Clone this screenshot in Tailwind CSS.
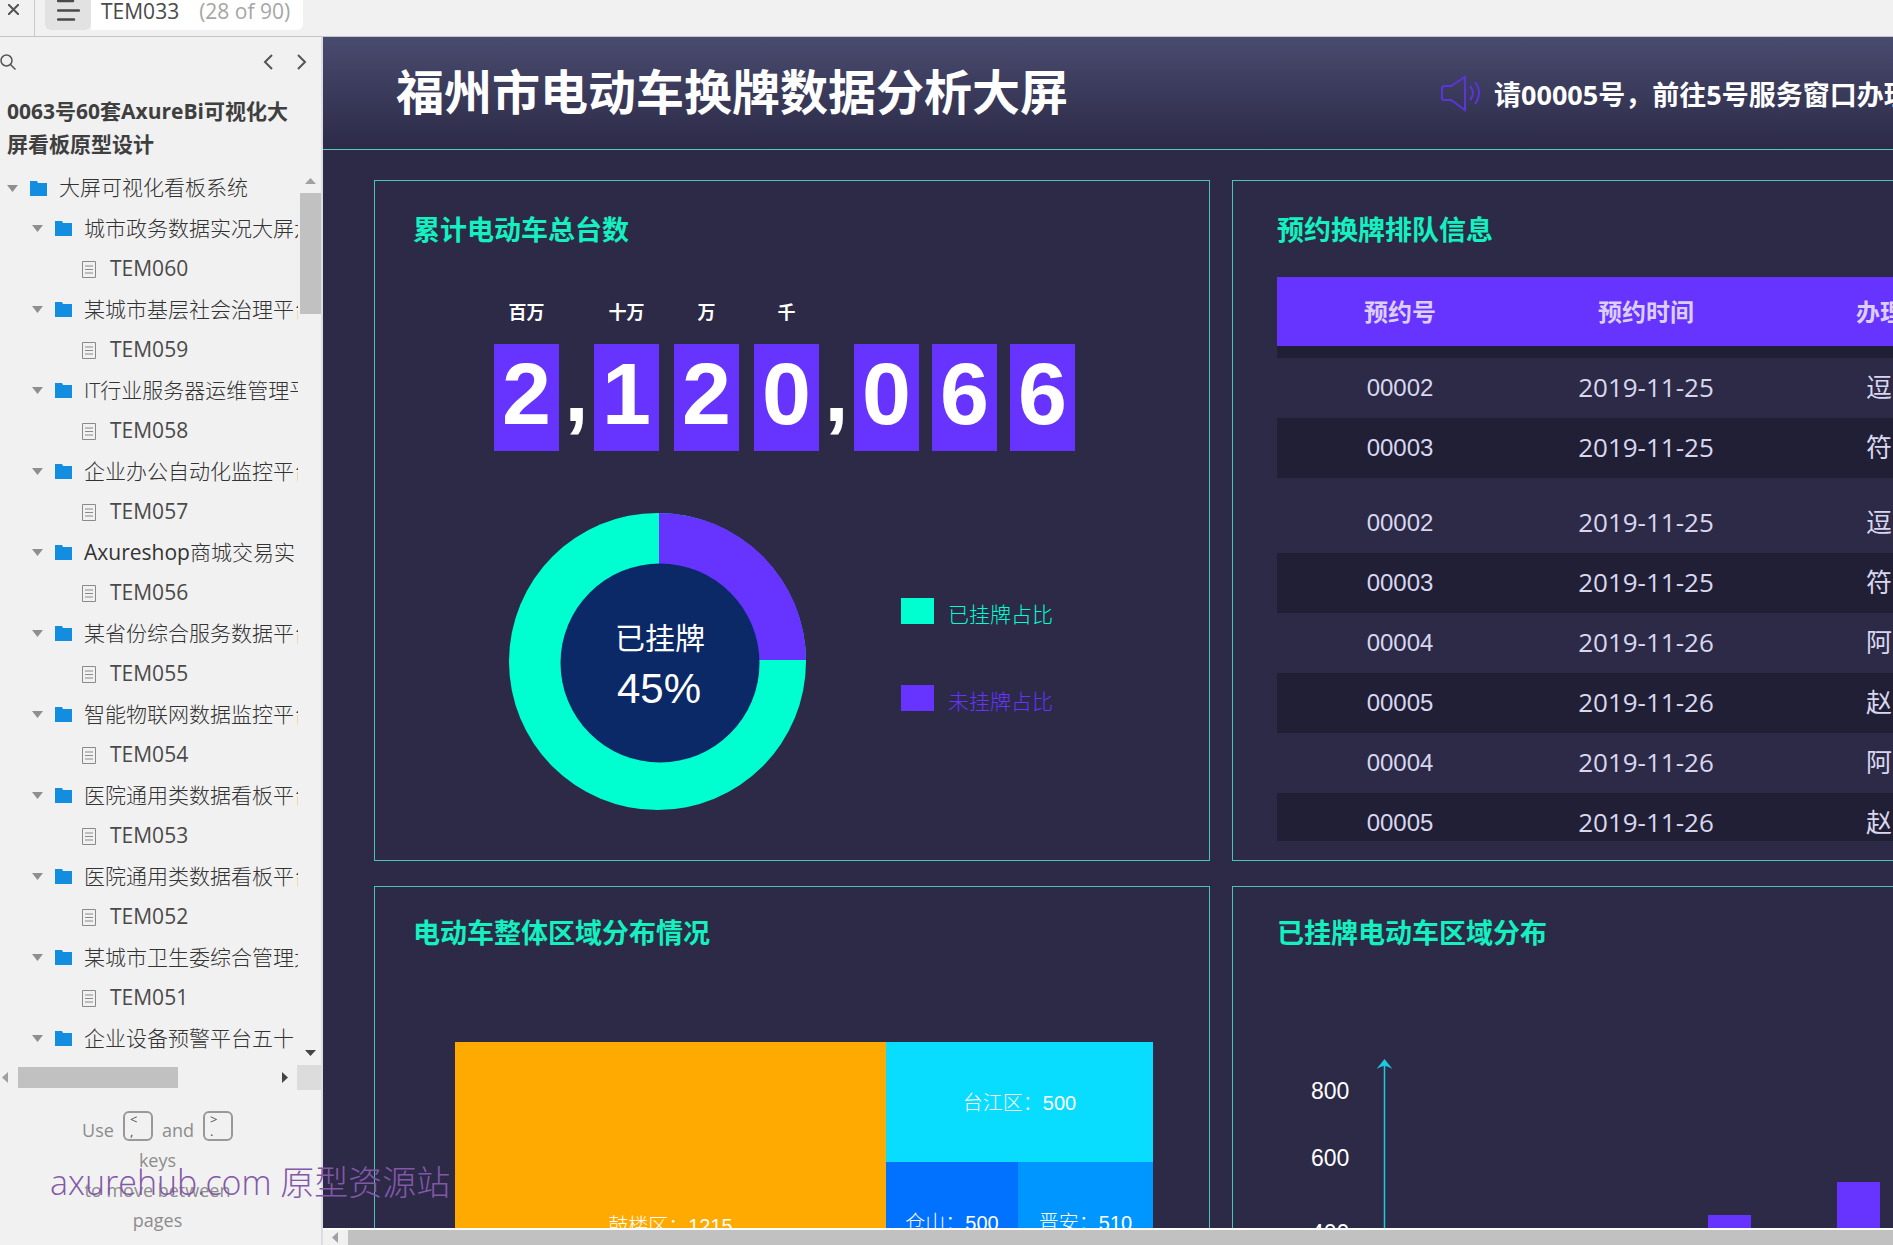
<!DOCTYPE html>
<html lang="zh-CN">
<head>
<meta charset="utf-8">
<title>TEM033</title>
<script src="https://cdn.jsdelivr.net/npm/@tailwindcss/browser@4"></script>
</head>
<body class="relative flex h-screen flex-col overflow-hidden bg-[#f1f1f1] font-['Open_Sans','Noto_Sans_CJK_SC',sans-serif] text-[#4a4a4a]">
<svg class="hidden">
  <symbol id="caret" viewBox="0 0 11 7"><path d="M0 0h11L5.500 7z" fill="#8f8f8f"/></symbol>
  <symbol id="folder" viewBox="0 0 17 15"><path d="M0 0h7l1 2h9v13H0z" fill="#128de0"/></symbol>
  <symbol id="page" viewBox="0 0 14 17"><path d="M.5.5h13v16H.5zM3 5h8M3 8.500h8M3 12h8" fill="none" stroke="#8a8a8a"/></symbol>
</svg>

<!-- Top toolbar -->
<header class="flex h-[37px] shrink-0 border-b border-[#c4c4cc]">
  <button aria-label="Close" class="flex w-[35px] items-start justify-start border-r border-[#c9c9c9] pt-1 pl-2">
    <svg class="size-[11px]" viewBox="0 0 11 11"><path d="M0 0l11 11M11 0L0 11" stroke="#555" stroke-width="2"/></svg>
  </button>
  <div class="ml-[10px] flex h-[30px]">
    <button aria-label="Pages" class="w-[46px] rounded-b-md bg-[#e2e2e2] pl-3">
      <svg class="h-[30px] w-[23px]" viewBox="0 0 23 30"><path d="M1 1h15M1 10.500h21M1 19.500h16" stroke="#4a4a4a" stroke-width="2.500" stroke-linecap="round"/></svg>
    </button>
    <div class="flex w-[212px] gap-5 rounded-br-md bg-white pl-[10px] text-[21px] leading-[22px]">
      <span>TEM033</span><span class="whitespace-nowrap text-[#a6a6a6]">(28 of 90)</span>
    </div>
  </div>
</header>

<div class="flex min-h-0 flex-1">
  <!-- Sitemap sidebar -->
  <aside class="flex w-[323px] shrink-0 flex-col border-r-2 border-[#dcdce2]">
    <div class="flex h-[50px] shrink-0 items-center">
      <button aria-label="Search"><svg class="size-4" viewBox="0 0 16 16" fill="none" stroke="#555" stroke-width="1.500"><circle cx="6.500" cy="6.500" r="5.500"/><path d="M10.500 10.500l5 5"/></svg></button>
      <button aria-label="Previous page" class="ml-auto"><svg class="h-4 w-[10px]" viewBox="0 0 10 16"><path d="M9 1L2 8l7 7" fill="none" stroke="#555" stroke-width="2"/></svg></button>
      <button aria-label="Next page" class="mr-[14px] ml-6"><svg class="h-4 w-[10px]" viewBox="0 0 10 16"><path d="M1 1l7 7-7 7" fill="none" stroke="#555" stroke-width="2"/></svg></button>
    </div>
    <h2 class="h-[81px] shrink-0 pt-2 pr-5 pl-[7px] text-[21px] leading-[33px] font-bold text-[#3f3f3f]">0063号60套AxureBi可视化大屏看板原型设计</h2>
    <div class="flex min-h-0 flex-1">
      <nav class="min-w-0 flex-1 overflow-hidden text-[21px] whitespace-nowrap [&_.d]:h-[41px] [&_.d]:pl-8 [&_.d]:font-light [&_.d]:text-[#333] [&_.p]:h-10 [&_.p]:pl-[82px] [&_a]:flex [&_a]:items-center">
        <a href="#" class="h-10 pl-[7px] font-light text-[#333]"><svg class="mr-3 h-[7px] w-[11px] shrink-0"><use href="#caret"/></svg><svg class="mr-3 h-[15px] w-[17px] shrink-0"><use href="#folder"/></svg>大屏可视化看板系统</a>
        <ul>
          <li><a href="#" class="d"><svg class="mr-3 h-[7px] w-[11px] shrink-0"><use href="#caret"/></svg><svg class="mr-3 h-[15px] w-[17px] shrink-0"><use href="#folder"/></svg>城市政务数据实况大屏六十</a><a href="#" class="p"><svg class="mr-[14px] h-[17px] w-[14px] shrink-0"><use href="#page"/></svg>TEM060</a></li>
          <li><a href="#" class="d"><svg class="mr-3 h-[7px] w-[11px] shrink-0"><use href="#caret"/></svg><svg class="mr-3 h-[15px] w-[17px] shrink-0"><use href="#folder"/></svg>某城市基层社会治理平台</a><a href="#" class="p"><svg class="mr-[14px] h-[17px] w-[14px] shrink-0"><use href="#page"/></svg>TEM059</a></li>
          <li><a href="#" class="d"><svg class="mr-3 h-[7px] w-[11px] shrink-0"><use href="#caret"/></svg><svg class="mr-3 h-[15px] w-[17px] shrink-0"><use href="#folder"/></svg>IT行业服务器运维管理平台</a><a href="#" class="p"><svg class="mr-[14px] h-[17px] w-[14px] shrink-0"><use href="#page"/></svg>TEM058</a></li>
          <li><a href="#" class="d"><svg class="mr-3 h-[7px] w-[11px] shrink-0"><use href="#caret"/></svg><svg class="mr-3 h-[15px] w-[17px] shrink-0"><use href="#folder"/></svg>企业办公自动化监控平台</a><a href="#" class="p"><svg class="mr-[14px] h-[17px] w-[14px] shrink-0"><use href="#page"/></svg>TEM057</a></li>
          <li><a href="#" class="d"><svg class="mr-3 h-[7px] w-[11px] shrink-0"><use href="#caret"/></svg><svg class="mr-3 h-[15px] w-[17px] shrink-0"><use href="#folder"/></svg><span class="font-normal">Axureshop</span>商城交易实</a><a href="#" class="p"><svg class="mr-[14px] h-[17px] w-[14px] shrink-0"><use href="#page"/></svg>TEM056</a></li>
          <li><a href="#" class="d"><svg class="mr-3 h-[7px] w-[11px] shrink-0"><use href="#caret"/></svg><svg class="mr-3 h-[15px] w-[17px] shrink-0"><use href="#folder"/></svg>某省份综合服务数据平台</a><a href="#" class="p"><svg class="mr-[14px] h-[17px] w-[14px] shrink-0"><use href="#page"/></svg>TEM055</a></li>
          <li><a href="#" class="d"><svg class="mr-3 h-[7px] w-[11px] shrink-0"><use href="#caret"/></svg><svg class="mr-3 h-[15px] w-[17px] shrink-0"><use href="#folder"/></svg>智能物联网数据监控平台</a><a href="#" class="p"><svg class="mr-[14px] h-[17px] w-[14px] shrink-0"><use href="#page"/></svg>TEM054</a></li>
          <li><a href="#" class="d"><svg class="mr-3 h-[7px] w-[11px] shrink-0"><use href="#caret"/></svg><svg class="mr-3 h-[15px] w-[17px] shrink-0"><use href="#folder"/></svg>医院通用类数据看板平台</a><a href="#" class="p"><svg class="mr-[14px] h-[17px] w-[14px] shrink-0"><use href="#page"/></svg>TEM053</a></li>
          <li><a href="#" class="d"><svg class="mr-3 h-[7px] w-[11px] shrink-0"><use href="#caret"/></svg><svg class="mr-3 h-[15px] w-[17px] shrink-0"><use href="#folder"/></svg>医院通用类数据看板平台</a><a href="#" class="p"><svg class="mr-[14px] h-[17px] w-[14px] shrink-0"><use href="#page"/></svg>TEM052</a></li>
          <li><a href="#" class="d"><svg class="mr-3 h-[7px] w-[11px] shrink-0"><use href="#caret"/></svg><svg class="mr-3 h-[15px] w-[17px] shrink-0"><use href="#folder"/></svg>某城市卫生委综合管理大屏</a><a href="#" class="p"><svg class="mr-[14px] h-[17px] w-[14px] shrink-0"><use href="#page"/></svg>TEM051</a></li>
          <li><a href="#" class="d"><svg class="mr-3 h-[7px] w-[11px] shrink-0"><use href="#caret"/></svg><svg class="mr-3 h-[15px] w-[17px] shrink-0"><use href="#folder"/></svg>企业设备预警平台五十</a></li>
        </ul>
      </nav>
      <!-- Vertical scroll track -->
      <div class="flex w-[23px] flex-col items-center pt-[10px] pb-[9px] pl-[2px]">
        <svg class="h-[6px] w-[11px]" viewBox="0 0 11 6"><path d="M0 6h11L5.500 0z" fill="#a0a0a0"/></svg>
        <div class="mt-[9px] h-[121px] w-full bg-[#c1c1c1]"></div>
        <svg class="mt-auto h-[6px] w-[11px]" viewBox="0 0 11 6"><path d="M0 0h11L5.500 6z" fill="#444"/></svg>
      </div>
    </div>
    <!-- Horizontal scroll track -->
    <div class="flex h-[25px] shrink-0 items-center">
      <svg class="ml-[2px] h-[11px] w-[6px]" viewBox="0 0 6 11"><path d="M6 0v11L0 5.500z" fill="#a0a0a0"/></svg>
      <div class="ml-[10px] h-[21px] w-40 bg-[#c1c1c1]"></div>
      <svg class="mr-[9px] ml-auto h-[11px] w-[6px]" viewBox="0 0 6 11"><path d="M0 0v11l6-5.500z" fill="#444"/></svg>
      <div class="h-full w-6 bg-[#dcdcdc]"></div>
    </div>
    <div class="flex h-[155px] shrink-0 flex-col items-center pt-[17px] pr-[6px] text-[18px] leading-[30px] text-[#8c8c8c]">
      <div class="flex items-center gap-[9px]">
        <span class="pt-2">Use</span>
        <kbd class="flex size-[30px] flex-col rounded-md border-2 border-[#999] pl-[5px] font-['Open_Sans',sans-serif] text-[13px] leading-[12px] text-[#555]"><span>&lt;</span><span>,</span></kbd>
        <span class="pt-2">and</span>
        <kbd class="flex size-[30px] flex-col rounded-md border-2 border-[#999] pl-[5px] font-['Open_Sans',sans-serif] text-[13px] leading-[12px] text-[#555]"><span>&gt;</span><span>.</span></kbd>
      </div>
      <p class="text-center">keys<br>to move between<br>pages</p>
    </div>
  </aside>

  <!-- Prototype viewport -->
  <div class="flex min-w-0 flex-1 flex-col">
    <main class="min-h-0 flex-1 overflow-hidden bg-[#2c2a47]">
      <div class="w-[1796px]">
        <div class="flex h-[113px] items-center border-b border-[#56c8c2] bg-linear-to-b from-[#494b6f] to-[#2c2a47] pl-[73px] text-white">
          <h1 class="w-[1045px] pb-[3px] text-[48px] leading-none font-bold">福州市电动车换牌数据分析大屏</h1>
          <svg class="h-[46px] w-10" viewBox="0 0 40 46" fill="none" stroke="#5a35dc" stroke-width="2"><path d="M1 18q0-2 2-2h7L24 7v33L10 30H3q-2 0-2-2zM29 16q6 7 0 14M34 12q8 11 0 22"/></svg>
          <p class="pt-1 pl-[13px] text-[27px] font-bold">请00005号，前往5号服务窗口办理</p>
        </div>

        <div class="grid grid-cols-[836px_836px] grid-rows-[681px_681px] gap-x-[22px] gap-y-[25px] pt-[30px] pl-[51px] [&_h3]:text-[27px] [&_h3]:leading-10 [&_h3]:font-bold [&_h3]:text-[#14f0c0] [&>section]:border [&>section]:border-[#4cc2bc]">
          <!-- Total count -->
          <section class="pt-[29px] pl-[38px]">
            <h3>累计电动车总台数</h3>
            <div class="mt-[51px] ml-[81px] flex font-['Liberation_Sans','Noto_Sans_CJK_SC',sans-serif] text-[88px] leading-none font-bold text-white [&_b]:flex [&_b]:h-[107px] [&_b]:w-[65px] [&_b]:items-center [&_b]:justify-center [&_b]:bg-[#6633ff] [&_b]:pb-[7px] [&_i]:w-[35px] [&_i]:self-end [&_i]:pb-[7px] [&_i]:text-center [&_i]:leading-[107px] [&_i]:not-italic [&_span]:block [&_span]:h-[43px] [&_span]:text-center [&_span]:text-[18px] [&_span]:leading-6">
              <div><span>百万</span><b>2</b></div>
              <i>,</i>
              <div class="flex gap-[15px]">
                <div><span>十万</span><b>1</b></div>
                <div><span>万</span><b>2</b></div>
                <div><span>千</span><b>0</b></div>
              </div>
              <i>,</i>
              <div class="flex gap-[13px]">
                <div><span></span><b>0</b></div>
                <div><span></span><b>6</b></div>
                <div><span></span><b>6</b></div>
              </div>
            </div>
            <div class="mt-[62px] ml-24 flex">
              <svg class="h-[298px] w-[298px]" viewBox="509 513 298 298">
                <circle cx="657.500" cy="661.500" r="148.500" fill="#00ffd0"/>
                <path d="M659 660V513A147.500 147.500 0 0 1 806 660z" fill="#6633ff"/>
                <circle cx="660" cy="663" r="99.500" fill="#0b2967"/>
                <g fill="#fff" text-anchor="middle"><text x="660" y="649" font-size="30">已挂牌</text><text x="659" y="703" font-size="42" font-family="Liberation Sans">45%</text></g>
              </svg>
              <ul class="mt-[85px] ml-[94px] text-[21px] leading-[32px] font-light">
                <li class="flex h-[87px] gap-[14px] text-[#00ffd0]"><span class="h-[26px] w-[33px] bg-[#00ffd0]"></span>已挂牌占比</li>
                <li class="flex gap-[14px] text-[#6633ff]"><span class="h-[26px] w-[33px] bg-[#6633ff]"></span>未挂牌占比</li>
              </ul>
            </div>
          </section>

          <!-- Appointment queue -->
          <section class="overflow-hidden pt-[29px] pl-11">
            <h3>预约换牌排队信息</h3>
            <div class="mt-[27px] h-[564px] overflow-hidden">
              <table class="w-[738px] table-fixed border-collapse text-center text-[#d8d7ee] [&_td]:p-0 [&_td]:text-[26px] [&_td]:leading-10 [&_td:first-child]:font-['Liberation_Sans',sans-serif] [&_td:first-child]:text-[24px] [&_td:nth-child(n+2)]:pb-[2px]">
                <thead class="bg-[#6633ff] text-[24px] text-[#dccfff]"><tr class="h-[69px]"><th>预约号</th><th>预约时间</th><th>办理人</th></tr></thead>
                <tbody>
                  <tr class="h-3 bg-[#211f36]"><td colspan="3"></td></tr>
                  <tr class="h-[60px]"><td>00002</td><td>2019-11-25</td><td>逗号</td></tr>
                  <tr class="h-[60px] bg-[#211f36]"><td>00003</td><td>2019-11-25</td><td>符号</td></tr>
                  <tr class="h-[15px]"><td colspan="3"></td></tr>
                  <tr class="h-[60px]"><td>00002</td><td>2019-11-25</td><td>逗号</td></tr>
                  <tr class="h-[60px] bg-[#211f36]"><td>00003</td><td>2019-11-25</td><td>符号</td></tr>
                  <tr class="h-[60px]"><td>00004</td><td>2019-11-26</td><td>阿三</td></tr>
                  <tr class="h-[60px] bg-[#211f36]"><td>00005</td><td>2019-11-26</td><td>赵四</td></tr>
                  <tr class="h-[60px]"><td>00004</td><td>2019-11-26</td><td>阿三</td></tr>
                  <tr class="h-[60px] bg-[#211f36]"><td>00005</td><td>2019-11-26</td><td>赵四</td></tr>
                </tbody>
              </table>
            </div>
          </section>

          <!-- District treemap -->
          <section class="pt-[26px] pl-[38px]">
            <h3>电动车整体区域分布情况</h3>
            <div class="mt-[89px] ml-[42px] flex h-[366px] w-[698px] font-['Liberation_Sans','Noto_Sans_CJK_SC',sans-serif] text-[20px] font-light text-white">
              <div class="flex w-[431px] items-center justify-center bg-[#ffaa00] pt-[2px]">鼓楼区：1215</div>
              <div class="grid flex-1 grid-cols-[132px_135px] grid-rows-[120px_120px]">
                <div class="col-span-2 flex items-center justify-center bg-[#08dcff] pt-[2px]">台江区：500</div>
                <div class="flex items-center justify-center bg-[#0072ff] pt-[2px]">仓山：500</div>
                <div class="flex items-center justify-center bg-[#0096ff] pt-[2px]">晋安：510</div>
              </div>
            </div>
          </section>

          <!-- District bar chart -->
          <section class="pt-[26px] pl-11">
            <h3>已挂牌电动车区域分布</h3>
            <div class="mt-[106px] ml-[34px] flex h-[400px]">
              <div class="grid w-[65px] content-start pt-[19px] font-['Liberation_Sans',sans-serif] text-[23px] leading-[27px] text-white">
                <span class="h-[67px]">800</span><span class="h-[75px]">600</span><span>400</span>
              </div>
              <svg class="h-full w-[17px]" viewBox="0 0 17 400"><path d="M8.500 0l8 10q-5-3-8-3t-8 3z" fill="#1fc8dc"/><path d="M8.500 5v395" stroke="#1fc8dc" stroke-width="1.500"/></svg>
              <div class="flex items-end gap-[86px] pl-[315px]">
                <div class="w-[43px] bg-[#6633ff]" style="height:244px"></div>
                <div class="w-[43px] bg-[#6633ff]" style="height:277px"></div>
              </div>
            </div>
          </section>
        </div>
      </div>
    </main>
    <div class="flex h-[17px] shrink-0 items-center border-t-2 border-white">
      <svg class="ml-[9px] h-[11px] w-[6px]" viewBox="0 0 6 11"><path d="M6 0v11L0 5.500z" fill="#a0a0a0"/></svg>
      <div class="ml-[10px] h-full flex-1 bg-[#c1c1c1]"></div>
    </div>
  </div>
</div>

<!-- Site watermark -->
<p class="absolute bottom-[39px] left-[50px] text-[34px] leading-[48px] font-light whitespace-nowrap text-[#8458a8]">axurehub.com 原型资源站</p>
</body>
</html>
